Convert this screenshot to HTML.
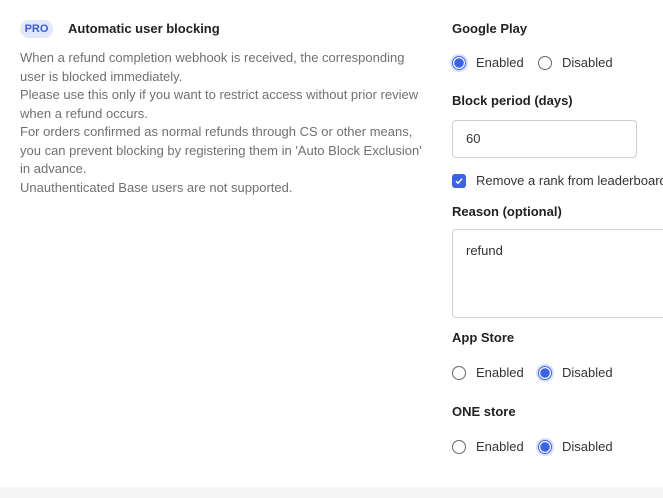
<!DOCTYPE html>
<html><head><meta charset="utf-8"><style>
body{margin:0;width:663px;height:498px;background:#fff;font-family:"Liberation Sans",sans-serif;position:relative;overflow:hidden;color:#222}
.a{position:absolute;white-space:nowrap}
.pro{left:20px;top:20px;width:33px;height:18px;border-radius:9px;background:#e2e8fb;color:#3b5bd9;font-size:11px;font-weight:bold;text-align:center;line-height:18px}
.desc{left:20px;top:49px;font-size:13px;line-height:18.5px;color:#707070}
.lbl{font-size:13px;font-weight:bold;color:#222}
.t{font-size:13px;color:#333}
.r{width:12px;height:12px;border:1.5px solid #666;border-radius:50%;box-sizing:content-box}
.r.on{border-color:#3b63e8;background:radial-gradient(circle,#3b63e8 0 4.5px,#fff 5px);box-shadow:0 0 0 2px #d5ddfb}
.box{border:1px solid #d0d0d0;border-radius:4px;background:#fff}
</style></head><body>
<div class="a pro">PRO</div>
<div class="a lbl" style="left:68px;top:21px">Automatic user blocking</div>
<div class="a desc">When a refund completion webhook is received, the corresponding<br>user is blocked immediately.<br>Please use this only if you want to restrict access without prior review<br>when a refund occurs.<br>For orders confirmed as normal refunds through CS or other means,<br>you can prevent blocking by registering them in 'Auto Block Exclusion'<br>in advance.<br>Unauthenticated Base users are not supported.</div>

<div class="a lbl" style="left:452px;top:21px">Google Play</div>
<div class="a r on" style="left:452px;top:56px"></div><div class="a t" style="left:476px;top:55px">Enabled</div>
<div class="a r" style="left:538px;top:56px"></div><div class="a t" style="left:562px;top:55px">Disabled</div>

<div class="a lbl" style="left:452px;top:93px">Block period (days)</div>
<div class="a box" style="left:452px;top:120px;width:183px;height:36px"></div>
<div class="a t" style="left:466px;top:131px">60</div>

<div class="a" style="left:452px;top:174px;width:14px;height:14px;border-radius:3px;background:#3b63e8"><svg width="14" height="14" viewBox="0 0 14 14"><path d="M4 7.2l2 2 4-4.4" stroke="#fff" stroke-width="1.5" fill="none"/></svg></div>
<div class="a t" style="left:476px;top:173px">Remove a rank from leaderboard</div>

<div class="a lbl" style="left:452px;top:204px">Reason (optional)</div>
<div class="a box" style="left:452px;top:229px;width:230px;height:87px"></div>
<div class="a t" style="left:466px;top:243px">refund</div>

<div class="a lbl" style="left:452px;top:330px">App Store</div>
<div class="a r" style="left:452px;top:366px"></div><div class="a t" style="left:476px;top:365px">Enabled</div>
<div class="a r on" style="left:538px;top:366px"></div><div class="a t" style="left:562px;top:365px">Disabled</div>

<div class="a lbl" style="left:452px;top:404px">ONE store</div>
<div class="a r" style="left:452px;top:440px"></div><div class="a t" style="left:476px;top:439px">Enabled</div>
<div class="a r on" style="left:538px;top:440px"></div><div class="a t" style="left:562px;top:439px">Disabled</div>

<div class="a" style="left:0;top:487px;width:663px;height:11px;background:#f5f5f6"></div>
</body></html>
